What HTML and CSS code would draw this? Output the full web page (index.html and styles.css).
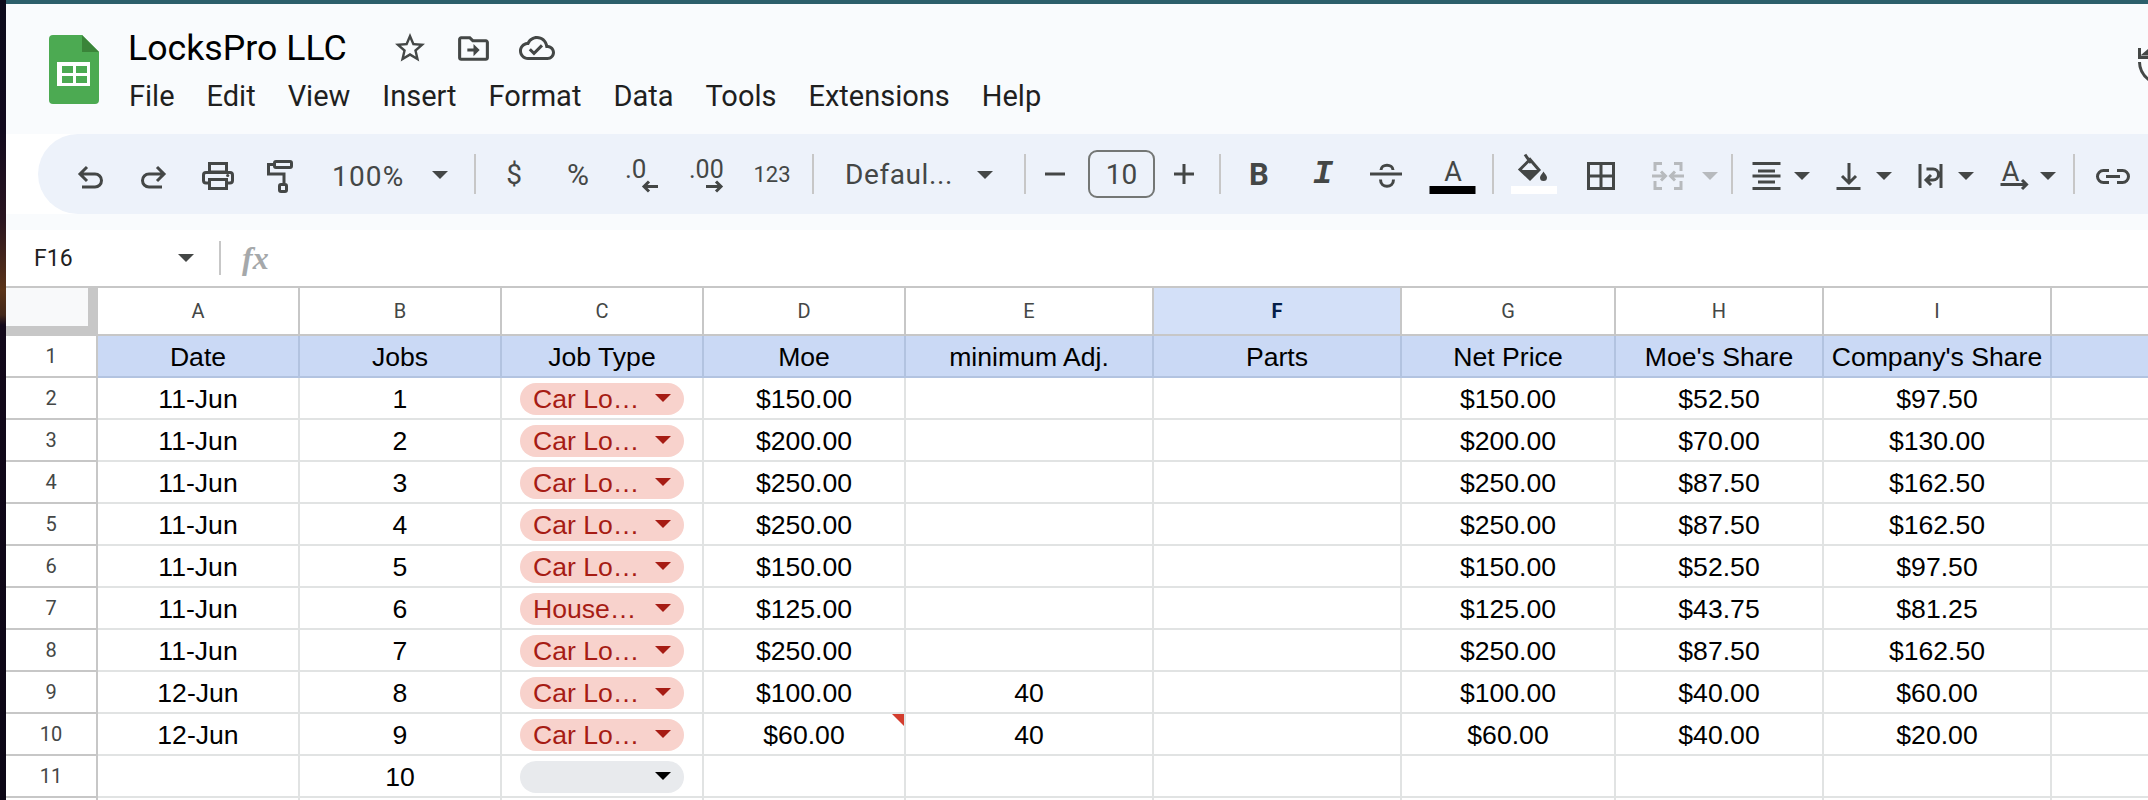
FILE: index.html
```html
<!DOCTYPE html>
<html lang="en">
<head>
    <meta charset="UTF-8">
    <title>LocksPro LLC - Google Sheets</title>
    <link rel="stylesheet" href="styles.css">
</head>
<body>
<div class="window">
    <div class="top-line"></div>

    <header class="doc-header">
        <svg class="sheet-logo" width="50" height="69" viewBox="0 0 50 69">
            <path fill="#4caa52" d="M4 0H33L50 17V65a4 4 0 0 1-4 4H4a4 4 0 0 1-4-4V4a4 4 0 0 1 4-4z"/>
            <path fill="#3a8439" d="M33 0L50 17H33z"/>
            <rect fill="#fff" x="8" y="27" width="33" height="24"/>
            <rect fill="#4caa52" x="13" y="31" width="11" height="7"/>
            <rect fill="#4caa52" x="27" y="31" width="11" height="7"/>
            <rect fill="#4caa52" x="13" y="41" width="11" height="7"/>
            <rect fill="#4caa52" x="27" y="41" width="11" height="7"/>
        </svg>
        <div class="doc-titles">
            <div class="title-row">
                <span class="doc-name">LocksPro LLC</span>
                <svg class="star-icon" width="36" height="36" viewBox="0 0 24 24"><path d="M22 9.24l-7.19-.62L12 2 9.19 8.63 2 9.24l5.46 4.73L5.82 21 12 17.27 18.18 21l-1.63-7.03L22 9.24zM12 15.4l-3.76 2.27 1-4.28-3.32-2.88 4.38-.38L12 6.1l1.71 4.04 4.38.38-3.32 2.88 1 4.28L12 15.4z"/></svg>
                <svg class="folder-icon" width="37" height="37" viewBox="0 0 24 24"><path d="M20 6h-8l-2-2H4c-1.1 0-2 .9-2 2v12c0 1.1.9 2 2 2h16c1.1 0 2-.9 2-2V8c0-1.1-.9-2-2-2zm0 12H4V6h5.17l2 2H20v10zm-8-4H8v-2h4V9l4 4-4 4v-3z"/></svg>
                <svg class="cloud-icon" width="36" height="36" viewBox="0 0 24 24"><path d="M19.35 10.04C18.67 6.59 15.64 4 12 4 9.11 4 6.6 5.64 5.35 8.04 2.34 8.36 0 10.91 0 14c0 3.31 2.69 6 6 6h13c2.76 0 5-2.24 5-5 0-2.64-2.05-4.78-4.65-4.96zM19 18H6c-2.21 0-4-1.79-4-4 0-2.05 1.53-3.76 3.56-3.97l1.07-.11.5-.95C8.08 7.14 9.94 6 12 6c2.62 0 4.88 1.86 5.39 4.43l.3 1.5 1.53.11c1.56.1 2.78 1.41 2.78 2.96 0 1.65-1.35 3-3 3zm-9-3.82l-2.09-2.09L6.5 13.5 10 17l6.01-6.01-1.41-1.41z"/></svg>
            </div>
            <nav class="menu-row">
                <span>File</span>
                <span>Edit</span>
                <span>View</span>
                <span>Insert</span>
                <span>Format</span>
                <span>Data</span>
                <span>Tools</span>
                <span>Extensions</span>
                <span>Help</span>
            </nav>
        </div>
        <svg class="history-icon" width="12" height="36" viewBox="0 0 12 36"><path d="M2 0h3v7.5h7V11H2z"/><path d="M5 7l7-6v6z"/><path fill="none" stroke="#444746" stroke-width="3" d="M3.5 14c0 7 3 13 9.5 18"/></svg>
    </header>

    <div class="toolbar">
        <span class="tb-btn"><svg class="ico" viewBox="0 0 48 48"><path d="M21 17L14 24L21 31M14 24H29a6.5 6.5 0 0 1 0 13H16"/></svg></span>
        <span class="tb-btn"><svg class="ico" viewBox="0 0 48 48"><path d="M27 17L34 24L27 31M34 24H19a6.5 6.5 0 0 0 0 13H32"/></svg></span>
        <span class="tb-btn"><svg class="ico" viewBox="0 0 48 48"><rect x="15.5" y="13.5" width="17" height="8.5"/><rect x="9.5" y="22.5" width="29" height="10.5" rx="2.5"/><rect class="ico-bg" x="15.5" y="29.5" width="17" height="9"/><circle class="ico-fill" cx="33.7" cy="25.5" r="1.6"/></svg></span>
        <span class="tb-btn"><svg class="ico" viewBox="0 0 48 48"><rect x="16.5" y="11.5" width="17" height="6" rx="1.5"/><path d="M16 14.5H10.5V24H26V33"/><rect x="21.5" y="34.5" width="7" height="7" rx="1.5"/></svg></span>
        <span class="tb-select tb-zoom"><span>100%</span><i class="caret"></i></span>
        <i class="tb-sep"></i>
        <span class="tb-btn tb-glyph">$</span>
        <span class="tb-btn tb-glyph tb-light">%</span>
        <span class="tb-btn"><svg class="ico" viewBox="0 0 48 48"><text x="7" y="28">.0</text><path d="M40 36.5H26M31 31.5L26 36.5L31 41.5"/></svg></span>
        <span class="tb-btn"><svg class="ico" viewBox="0 0 48 48"><text class="ico-dec" x="7" y="28">.00</text><path d="M24 36.5H39M34 31.5L39 36.5L34 41.5"/></svg></span>
        <span class="tb-btn tb-num">123</span>
        <i class="tb-sep"></i>
        <span class="tb-select tb-font"><span>Defaul...</span><i class="caret"></i></span>
        <i class="tb-sep"></i>
        <span class="tb-btn tb-minus"><svg class="ico" viewBox="0 0 48 48"><path d="M13 24H33"/></svg></span>
        <span class="size-box">10</span>
        <span class="tb-btn tb-plus"><svg class="ico" viewBox="0 0 48 48"><path d="M14 24H34M24 14V34"/></svg></span>
        <i class="tb-sep"></i>
        <span class="tb-btn tb-glyph tb-bold">B</span>
        <span class="tb-btn tb-glyph tb-italic">I</span>
        <span class="tb-btn"><svg class="ico" viewBox="0 0 48 48"><path d="M7 24H39M18 20C18 13.5 30 13.5 30 20M17.5 29.5C17.5 38.5 30.5 38.5 30.5 29.5"/></svg></span>
        <span class="tb-btn tb-color"><svg class="ico" viewBox="0 0 48 48"><text class="ico-a" x="24" y="31" text-anchor="middle">A</text><rect class="swatch-black" x="0.5" y="36" width="46" height="8"/></svg></span>
        <i class="tb-sep"></i>
        <span class="tb-btn tb-fill"><svg class="ico" viewBox="0 0 48 48"><path d="M15 4.5L21 13M10 19.5L20 9.5L29 20L20 29z"/><path class="ico-fill" d="M10 20H29L20 29z"/><path class="ico-fill" d="M33.5 21.5c-1 2-3.5 4-3.5 6a3.5 3.5 0 0 0 7 0c0-2-2.5-4-3.5-6z"/><rect class="swatch-white" x="1" y="36" width="46" height="8"/></svg></span>
        <span class="tb-btn tb-borders"><svg class="ico" viewBox="0 0 48 48"><path d="M11.5 13.5H36.5V38.5H11.5zM24 13.5V38.5M11.5 26H36.5"/></svg></span>
        <span class="tb-btn tb-merge"><svg class="ico ico-off" viewBox="0 0 48 48"><path d="M18 13.5H11V21M18 38.5H11V31M30 13.5H37V21M30 38.5H37V31M8 26H21M17 21.5L21.5 26L17 30.5M40 26H27M31 21.5L26.5 26L31 30.5"/></svg></span>
        <span class="tb-split"><i class="caret caret-off"></i></span>
        <i class="tb-sep"></i>
        <span class="tb-drop"><span class="tb-slot"><svg class="ico" viewBox="0 0 48 48"><path d="M9.5 13.5H37.5M15 21H32M9.5 26H37.5M15 32H32M9.5 38.5H37.5"/></svg></span><i class="caret"></i></span>
        <span class="tb-drop"><span class="tb-slot"><svg class="ico" viewBox="0 0 48 48"><path d="M11.5 38.5H35.5M24 13V32M17 26L24 33L31 26"/></svg></span><i class="caret"></i></span>
        <span class="tb-drop"><span class="tb-slot"><svg class="ico" viewBox="0 0 48 48"><path d="M13 14V38M34 14V38M19.5 19H26a5.5 5.5 0 0 1 0 11H20M24 25L19 30L24 35"/></svg></span><i class="caret"></i></span>
        <span class="tb-drop"><span class="tb-slot"><svg class="ico" viewBox="0 0 48 48"><text class="ico-a" x="21.5" y="31" text-anchor="middle">A</text><path d="M11.5 34.5H37M33 30L37.5 34.5L33 39"/></svg></span><i class="caret"></i></span>
        <i class="tb-sep"></i>
        <span class="tb-btn"><svg class="ico" viewBox="0 0 48 48"><path d="M20 20.5H14.5a6 6 0 0 0 0 12H20M28 20.5H33.5a6 6 0 0 1 0 12H28M17 26.5H31"/></svg></span>
    </div>
    <div class="toolbar-gap"></div>

    <div class="formula-bar">
        <span class="cell-ref">F16</span>
        <i class="caret"></i>
        <i class="formula-sep"></i>
        <span class="fx">fx</span>
    </div>

    <table class="sheet">
        <colgroup>
            <col class="col-rows">
            <col class="col-std"><col class="col-std"><col class="col-std"><col class="col-std">
            <col class="col-wide"><col class="col-wide">
            <col class="col-g"><col class="col-h"><col class="col-i"><col class="col-j">
        </colgroup>
        <thead>
            <tr>
                <th class="corner"><div class="corner-box"></div></th>
                <th>A</th><th>B</th><th>C</th><th>D</th><th>E</th>
                <th class="selected">F</th>
                <th>G</th><th>H</th><th>I</th><th></th>
            </tr>
        </thead>
        <tbody>
            <tr class="head-row">
                <th>1</th>
                <td>Date</td><td>Jobs</td><td>Job Type</td><td>Moe</td><td>minimum Adj.</td><td>Parts</td><td>Net Price</td><td>Moe's Share</td><td>Company's Share</td><td></td>
            </tr>
            <tr>
                <th>2</th>
                <td>11-Jun</td><td>1</td><td><span class="pill">Car Lo…<i class="caret"></i></span></td><td>$150.00</td><td></td><td></td><td>$150.00</td><td>$52.50</td><td>$97.50</td><td></td>
            </tr>
            <tr>
                <th>3</th>
                <td>11-Jun</td><td>2</td><td><span class="pill">Car Lo…<i class="caret"></i></span></td><td>$200.00</td><td></td><td></td><td>$200.00</td><td>$70.00</td><td>$130.00</td><td></td>
            </tr>
            <tr>
                <th>4</th>
                <td>11-Jun</td><td>3</td><td><span class="pill">Car Lo…<i class="caret"></i></span></td><td>$250.00</td><td></td><td></td><td>$250.00</td><td>$87.50</td><td>$162.50</td><td></td>
            </tr>
            <tr>
                <th>5</th>
                <td>11-Jun</td><td>4</td><td><span class="pill">Car Lo…<i class="caret"></i></span></td><td>$250.00</td><td></td><td></td><td>$250.00</td><td>$87.50</td><td>$162.50</td><td></td>
            </tr>
            <tr>
                <th>6</th>
                <td>11-Jun</td><td>5</td><td><span class="pill">Car Lo…<i class="caret"></i></span></td><td>$150.00</td><td></td><td></td><td>$150.00</td><td>$52.50</td><td>$97.50</td><td></td>
            </tr>
            <tr>
                <th>7</th>
                <td>11-Jun</td><td>6</td><td><span class="pill">House…<i class="caret"></i></span></td><td>$125.00</td><td></td><td></td><td>$125.00</td><td>$43.75</td><td>$81.25</td><td></td>
            </tr>
            <tr>
                <th>8</th>
                <td>11-Jun</td><td>7</td><td><span class="pill">Car Lo…<i class="caret"></i></span></td><td>$250.00</td><td></td><td></td><td>$250.00</td><td>$87.50</td><td>$162.50</td><td></td>
            </tr>
            <tr>
                <th>9</th>
                <td>12-Jun</td><td>8</td><td><span class="pill">Car Lo…<i class="caret"></i></span></td><td>$100.00</td><td>40</td><td></td><td>$100.00</td><td>$40.00</td><td>$60.00</td><td></td>
            </tr>
            <tr>
                <th>10</th>
                <td>12-Jun</td><td>9</td><td><span class="pill">Car Lo…<i class="caret"></i></span></td><td class="has-note">$60.00</td><td>40</td><td></td><td>$60.00</td><td>$40.00</td><td>$20.00</td><td></td>
            </tr>
            <tr>
                <th>11</th>
                <td></td><td>10</td><td><span class="pill pill-empty"><i class="caret"></i></span></td><td></td><td></td><td></td><td></td><td></td><td></td><td></td>
            </tr>
            <tr>
                <th></th>
                <td></td><td></td><td></td><td></td><td></td><td></td><td></td><td></td><td></td><td></td>
            </tr>
        </tbody>
    </table>
</div>
</body>
</html>
```

FILE: styles.css
```css
* {
    box-sizing: border-box;
}

html, body {
    margin: 0;
    height: 800px;
    overflow: hidden;
}

/* bit of desktop wallpaper on the left edge */
body {
    padding-left: 6px;
    background: linear-gradient(#0c0b1c 0, #120a1e 130px, #2a1520 220px, #5a3318 290px, #43281a 315px, #12081a 325px, #0c0716 800px);
    font-family: Roboto, "Liberation Sans", sans-serif;
}

.window {
    height: 800px;
    background: #fff;
    overflow: hidden;
}

.top-line {
    height: 4px;
    background: #2c5f6b;
}

.doc-header {
    display: flex;
    height: 130px;
    padding: 31px 0 0 43px;
    background: #f9fbfd;
}

.sheet-logo {
    flex: none;
}

.doc-titles {
    margin-left: 30px;
}

.title-row {
    display: flex;
    align-items: center;
    height: 36px;
    margin-top: -5px;
    fill: #444746;
}

.doc-name {
    margin: -1px 0 0 -1px;
    font-size: 35.7px;
    color: #000;
    white-space: nowrap;
}

.star-icon {
    margin-left: 45px;
}

.folder-icon {
    margin-left: 27px;
}

.cloud-icon {
    margin-left: 27px;
}

.menu-row {
    display: flex;
    gap: 32px;
    margin-top: 8px;
    font-size: 29px;
    line-height: 44px;
    color: #1f1f1f;
    white-space: nowrap;
}

.history-icon {
    flex: none;
    margin: 13px 0 0 auto;
    fill: #444746;
}

/* toolbar */
.toolbar {
    display: flex;
    align-items: center;
    height: 80px;
    margin-left: 32px;
    padding-left: 20px;
    border-radius: 40px 0 0 40px;
    background: #edf2fa;
    color: #444746;
    white-space: nowrap;
}

.toolbar-gap {
    height: 16px;
    background: #f9fbfd;
}

.tb-btn {
    display: flex;
    flex: none;
    align-items: center;
    justify-content: center;
    width: 64px;
    height: 48px;
}

.ico {
    flex: none;
    width: 48px;
    height: 48px;
    fill: none;
    stroke: #444746;
    stroke-width: 3;
}

.ico text {
    fill: #444746;
    stroke: none;
    font-family: Roboto, sans-serif;
    font-size: 26px;
}

.ico text.ico-dec {
    font-size: 25px;
}

.ico text.ico-a {
    font-size: 27px;
}

.ico-bg {
    fill: #edf2fa;
}

.ico-fill {
    fill: #444746;
    stroke: none;
}

.ico-off {
    stroke: #b7babd;
}

.swatch-black {
    fill: #000;
    stroke: none;
}

.swatch-white {
    fill: #fff;
    stroke: none;
}

.tb-sep {
    flex: none;
    width: 2px;
    height: 40px;
    margin: 0 6px;
    background: #c7c7c7;
}

.caret {
    display: inline-block;
    flex: none;
    width: 0;
    height: 0;
    border-top: 8px solid #444746;
    border-right: 8px solid transparent;
    border-left: 8px solid transparent;
}

.caret-off {
    border-top-color: #b7babd;
    margin-top: 3px;
}

.tb-select {
    display: flex;
    flex: none;
    align-items: center;
    justify-content: space-between;
    height: 48px;
    font-size: 28px;
    letter-spacing: .6px;
}

.tb-select .caret {
    margin-top: 1px;
}

.tb-select span {
    margin-top: 4px;
}

.tb-zoom {
    width: 154px;
    padding: 0 20px 0 18px;
    letter-spacing: 1.2px;
}

.tb-font {
    width: 198px;
    padding: 0 25px;
}

.tb-font span {
    margin-top: 0;
}

.tb-glyph {
    font-size: 28px;
}

.tb-light {
    font-size: 30px;
}

.tb-num {
    width: 68px;
    font-size: 22px;
}

.tb-minus {
    width: 56px;
    justify-content: flex-start;
}

.tb-plus {
    width: 58px;
}

.size-box {
    display: flex;
    flex: none;
    align-items: center;
    justify-content: center;
    width: 67px;
    height: 48px;
    border: 2px solid #747775;
    border-radius: 9px;
    font-size: 28px;
}

.tb-bold {
    font-size: 31px;
    font-weight: 700;
}

.tb-italic {
    font-family: "Liberation Mono", monospace;
    font-size: 34px;
    font-weight: 700;
    font-style: italic;
}

.tb-color {
    width: 67px;
}

.tb-fill {
    width: 68px;
}

.tb-borders {
    width: 66px;
}

.tb-merge {
    width: 68px;
}

.tb-split {
    display: flex;
    flex: none;
    width: 23px;
}

.tb-drop {
    display: flex;
    flex: none;
    align-items: center;
    width: 82px;
}

.tb-drop .caret {
    margin-top: 3px;
}

.tb-slot {
    display: flex;
    flex: none;
    justify-content: center;
    width: 55px;
}

/* formula bar */
.formula-bar {
    display: flex;
    align-items: center;
    height: 56px;
    padding-left: 28px;
    background: #fff;
}

.cell-ref {
    width: 144px;
    font-size: 23px;
    color: #1f1f1f;
}

.formula-sep {
    width: 2px;
    height: 34px;
    margin-left: 25px;
    background: #c7c7c7;
}

.fx {
    margin-left: 21px;
    font-family: "Liberation Serif", serif;
    font-size: 32px;
    font-weight: 700;
    font-style: italic;
    color: #a5a8aa;
}

/* grid */
.sheet {
    table-layout: fixed;
    width: 2142px;
    border-collapse: separate;
    border-spacing: 0;
    font-family: "Liberation Sans", Arial, sans-serif;
    font-size: 26.6px;
    color: #000;
}

.col-rows {
    width: 92px;
}

.col-std {
    width: 202px;
}

.col-wide {
    width: 248px;
}

.col-g {
    width: 214px;
}

.col-h {
    width: 208px;
}

.col-i {
    width: 228px;
}

.sheet th, .sheet td {
    padding: 0;
    text-align: center;
    white-space: nowrap;
}

.sheet th {
    font-family: Roboto, sans-serif;
    font-size: 20px;
    font-weight: 400;
    color: #444746;
    border-right: 2px solid #c7c7c7;
    border-bottom: 2px solid #c7c7c7;
}

.sheet td {
    height: 42px;
    padding-top: 2px;
    border-right: 2px solid #e1e3e3;
    border-bottom: 2px solid #e1e3e3;
}

.sheet thead th {
    height: 50px;
    border-top: 2px solid #c7c7c7;
}

.sheet thead th:last-child,
.sheet td:last-child {
    border-right: 0;
}

.sheet thead th.selected {
    background: #d3e0f8;
    font-weight: 700;
    color: #041e49;
}

.sheet .corner {
    vertical-align: top;
    border: 0;
    border-top: 2px solid #c7c7c7;
    background: #c7c7c7;
}

.corner-box {
    width: 82px;
    height: 38px;
    background: #f8f9fa;
}

.head-row td {
    background: #cad9f5;
    border-right-color: #b2c3e0;
    border-bottom-color: #b2c3e0;
}

.pill {
    display: inline-flex;
    align-items: center;
    justify-content: space-between;
    width: 164px;
    height: 32px;
    margin-top: -2px;
    padding: 2px 13px 0 13px;
    border-radius: 16px;
    background: #f8d2cc;
    color: #a61c14;
    vertical-align: middle;
}

.pill .caret {
    margin-top: -4px;
    border-top-color: #a61c14;
}

.pill-empty {
    justify-content: flex-end;
    background: #e8eaed;
}

.pill-empty .caret {
    border-top-color: #000;
}

.has-note {
    position: relative;
}

.has-note::after {
    content: "";
    position: absolute;
    top: 0;
    right: 0;
    width: 12px;
    height: 12px;
    background: #d33d2e;
    clip-path: polygon(0 0, 100% 0, 100% 100%);
}
```
